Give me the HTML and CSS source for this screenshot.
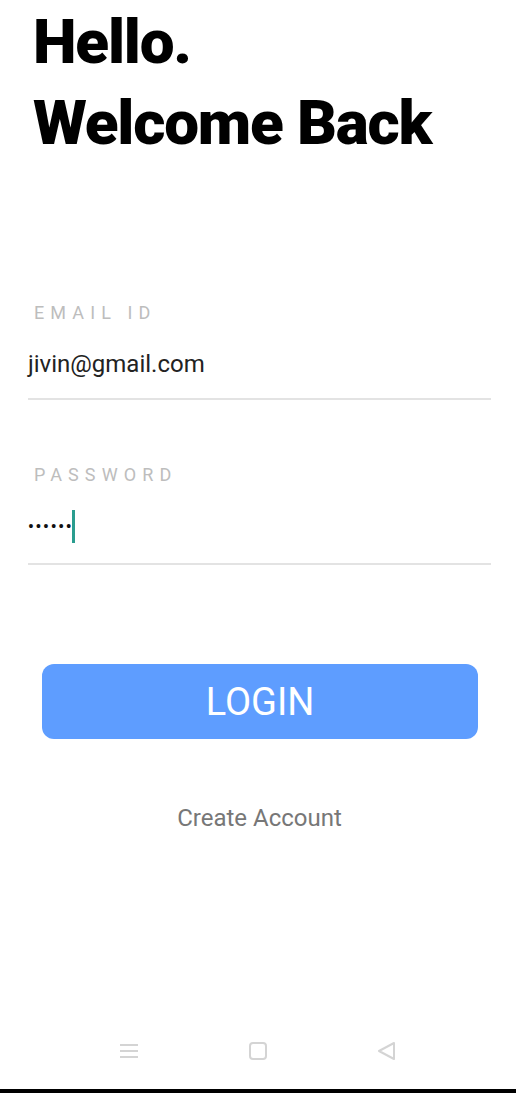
FILE: index.html
```html
<!DOCTYPE html>
<html>
<head>
<meta charset="utf-8">
<link rel="stylesheet" href="styles.css">
</head>
<body>
<div class="screen">
  <main class="content">
    <h1 class="title">Hello.<br>Welcome Back</h1>
    <form class="form">
      <div class="field field-email">
        <label class="label">EMAIL ID</label>
        <div class="value">jivin@gmail.com</div>
      </div>
      <div class="field field-pass">
        <label class="label">PASSWORD</label>
        <div class="value"><span class="dots">••••••</span><span class="cursor"></span></div>
      </div>
      <button type="button" class="login">LOGIN</button>
      <div class="create">Create Account</div>
    </form>
  </main>
  <nav class="navbar">
    <svg class="nav-icon" width="20" height="20" viewBox="0 0 20 20"><path d="M1 4h18M1 10h18M1 16h18" stroke="#d4d4d4" stroke-width="2" fill="none"/></svg>
    <svg class="nav-icon" width="20" height="20" viewBox="0 0 20 20"><rect x="2" y="2" width="16" height="16" rx="3" stroke="#d4d4d4" stroke-width="2" fill="none"/></svg>
    <svg class="nav-icon" width="20" height="20" viewBox="0 0 20 20"><path d="M17 2 L2 10 L17 18 Z" stroke="#d4d4d4" stroke-width="2" stroke-linejoin="round" fill="none"/></svg>
  </nav>
  <div class="bottom-edge"></div>
</div>
</body>
</html>
```
FILE: styles.css
```css
html, body {
  margin: 0;
  padding: 0;
  background: #fff;
}
.screen {
  width: 516px;
  height: 1093px;
  display: flex;
  flex-direction: column;
  font-family: Roboto, "Liberation Sans", sans-serif;
}
.content {
  flex: 1;
  padding: 0 25px 0 28px;
}
.title {
  margin: 0;
  padding: 1px 0 0 5px;
  font-size: 62px;
  font-weight: 900;
  line-height: 81px;
  color: #000;
  letter-spacing: -1.2px;
}
.form {
  margin-top: 139px;
  display: flex;
  flex-direction: column;
}
.field {
  border-bottom: 2px solid #e3e3e3;
}
.label {
  display: block;
  padding-left: 6px;
  font-size: 18px;
  font-weight: 400;
  letter-spacing: 6.1px;
  color: #bdbdbd;
  line-height: 22px;
}
.value {
  box-sizing: border-box;
  height: 74px;
  padding-top: 5px;
  font-size: 24px;
  color: #222;
  display: flex;
  align-items: center;
}
.field-pass {
  margin-top: 64px;
}
.field-pass .value {
  height: 77px;
  padding-top: 3px;
}
.dots {
  font-size: 16px;
  font-weight: 700;
  letter-spacing: 1.8px;
  color: #111;
}
.cursor {
  display: inline-block;
  width: 3px;
  height: 33px;
  background: #2a9d8f;
  margin-left: -1px;
}
.login {
  margin: 99px 13px 0 14px;
  height: 75px;
  border: none;
  border-radius: 12px;
  background: #5e9dff;
  color: #fff;
  font-family: Roboto, "Liberation Sans", sans-serif;
  font-size: 38px;
  padding: 0;
}
.create {
  margin-top: 65px;
  text-align: center;
  font-size: 24px;
  line-height: 28px;
  color: #777;
}
.navbar {
  height: 60px;
  display: flex;
  justify-content: center;
  align-items: center;
  gap: 109px;
  padding-bottom: 8px;
}
.bottom-edge {
  height: 4px;
  background: #000;
}
```
